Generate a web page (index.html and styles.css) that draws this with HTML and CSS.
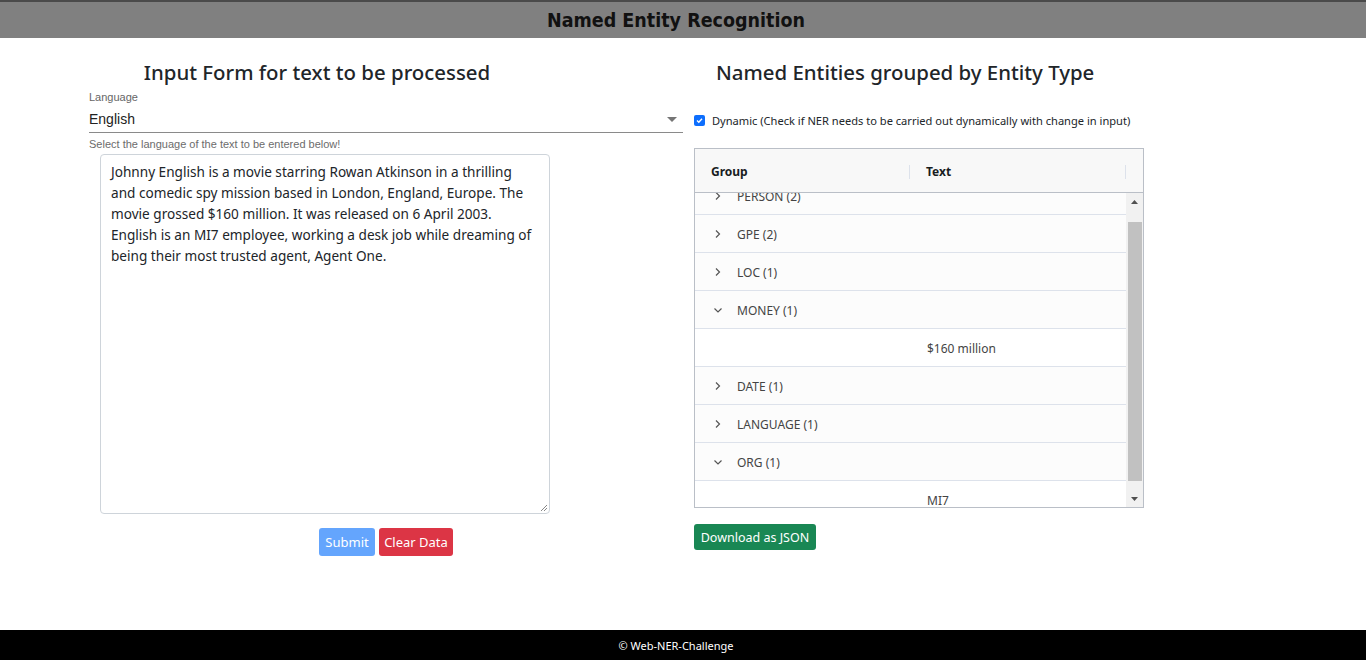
FILE: index.html
```html
<!DOCTYPE html>
<html lang="en">
<head>
<meta charset="utf-8">
<title>Named Entity Recognition</title>
<link rel="stylesheet" href="styles.css">
</head>
<body>
<header class="topbar"><h1 class="app-title">Named Entity Recognition</h1></header>
<main class="content">
  <section class="form-col">
    <h2 class="col-title left-title">Input Form for text to be processed</h2>
    <div class="select-field">
      <label class="select-label">Language</label>
      <div class="select-input"><span>English</span><span class="select-arrow"></span></div>
      <div class="select-helper">Select the language of the text to be entered below!</div>
    </div>
    <div class="textarea-wrap">
      <div class="textarea">Johnny English is a movie starring Rowan Atkinson in a thrilling and comedic spy mission based in London, England, Europe. The movie grossed $160 million. It was released on 6 April 2003. English is an MI7 employee, working a desk job while dreaming of being their most trusted agent, Agent One.<svg class="resize" width="8" height="8" viewBox="0 0 8 8"><path d="M7 1L1 7M7 4L4 7" stroke="#888" stroke-width="1"/></svg></div>
    </div>
    <div class="btn-row">
      <button class="btn btn-submit">Submit</button>
      <button class="btn btn-clear">Clear Data</button>
    </div>
  </section>
  <section class="result-col">
    <h2 class="col-title right-title">Named Entities grouped by Entity Type</h2>
    <label class="check-row"><span class="checkbox"><svg width="9" height="9" viewBox="0 0 9 9"><path d="M2 4.6L3.8 6.3L7 2.8" fill="none" stroke="#fff" stroke-width="1.4"/></svg></span>Dynamic (Check if NER needs to be carried out dynamically with change in input)</label>
    <div class="grid">
      <div class="grid-head">
        <div class="hcell hcell-group">Group</div>
        <div class="hcell hcell-text">Text</div>
      </div>
      <div class="grid-body">
        <div class="viewport">
          <div class="rows">
            <div class="row group"><svg class="chev" width="10" height="10" viewBox="0 0 10 10"><path d="M3 1.5L6.5 5L3 8.5" fill="none" stroke="#555" stroke-width="1.2"/></svg>PERSON (2)</div>
            <div class="row group"><svg class="chev" width="10" height="10" viewBox="0 0 10 10"><path d="M3 1.5L6.5 5L3 8.5" fill="none" stroke="#555" stroke-width="1.2"/></svg>GPE (2)</div>
            <div class="row group"><svg class="chev" width="10" height="10" viewBox="0 0 10 10"><path d="M3 1.5L6.5 5L3 8.5" fill="none" stroke="#555" stroke-width="1.2"/></svg>LOC (1)</div>
            <div class="row group"><svg class="chev" width="10" height="10" viewBox="0 0 10 10"><path d="M1.5 3.5L5 7L8.5 3.5" fill="none" stroke="#555" stroke-width="1.2"/></svg>MONEY (1)</div>
            <div class="row leaf"><span class="leaf-text">$160 million</span></div>
            <div class="row group"><svg class="chev" width="10" height="10" viewBox="0 0 10 10"><path d="M3 1.5L6.5 5L3 8.5" fill="none" stroke="#555" stroke-width="1.2"/></svg>DATE (1)</div>
            <div class="row group"><svg class="chev" width="10" height="10" viewBox="0 0 10 10"><path d="M3 1.5L6.5 5L3 8.5" fill="none" stroke="#555" stroke-width="1.2"/></svg>LANGUAGE (1)</div>
            <div class="row group"><svg class="chev" width="10" height="10" viewBox="0 0 10 10"><path d="M1.5 3.5L5 7L8.5 3.5" fill="none" stroke="#555" stroke-width="1.2"/></svg>ORG (1)</div>
            <div class="row leaf"><span class="leaf-text">MI7</span></div>
          </div>
        </div>
        <div class="scrollbar">
          <div class="sb-btn"><svg width="7" height="4" viewBox="0 0 7 4"><path d="M0 4L3.5 0L7 4Z" fill="#505050"/></svg></div>
          <div class="sb-track"><div class="sb-thumb"></div></div>
          <div class="sb-btn"><svg width="7" height="4" viewBox="0 0 7 4"><path d="M0 0L3.5 4L7 0Z" fill="#505050"/></svg></div>
        </div>
      </div>
    </div>
    <button class="btn btn-download">Download as JSON</button>
  </section>
</main>
<footer class="footer">© Web-NER-Challenge</footer>
</body>
</html>
```
FILE: styles.css
```css
* { box-sizing: border-box; }
html, body { margin: 0; padding: 0; }
body {
  width: 1366px;
  height: 660px;
  overflow: hidden;
  font-family: "Noto Sans", "Open Sans", sans-serif;
  color: #212529;
  background: #fff;
  display: flex;
  flex-direction: column;
}
.topbar {
  height: 38px;
  background: #808080;
  border-top: 2px solid #4a4a4a;
  display: flex;
  align-items: center;
  justify-content: center;
  padding-right: 14px;
}
.app-title {
  margin: 0;
  font-family: "DejaVu Sans Condensed", "DejaVu Sans", sans-serif;
  font-weight: bold;
  font-size: 19.5px;
  color: #111;
}
.content {
  flex: 1;
  display: flex;
  padding-left: 89px;
  gap: 11px;
}
.form-col { width: 594px; display: flex; flex-direction: column; }
.result-col { width: 460px; display: flex; flex-direction: column; }
.col-title {
  margin: 0;
  font-weight: 500;
  font-size: 20.4px;
  line-height: 28px;
  color: #212529;
  padding-top: 20px;
}
.left-title { width: 456px; text-align: center; }
.right-title { padding-left: 22px; }
.select-field { margin-top: 5px; font-family: "Liberation Sans", Arial, sans-serif; }
.select-label { display: block; font-size: 11px; color: #666; line-height: 13px; }
.select-input {
  height: 29px;
  display: flex;
  align-items: center;
  justify-content: space-between;
  border-bottom: 1px solid #8a8a8a;
  font-size: 14px;
  color: #222;
  padding-top: 2px;
}
.select-arrow {
  width: 0; height: 0;
  border-left: 5px solid transparent;
  border-right: 5px solid transparent;
  border-top: 5px solid #757575;
  margin-right: 6px;
}
.select-helper { font-size: 11px; color: #6c6c6c; line-height: 13px; margin-top: 5px; }
.textarea-wrap { padding-left: 11px; margin-top: 3px; }
.textarea {
  position: relative;
  width: 450px;
  height: 360px;
  border: 1px solid #ced4da;
  border-radius: 4px;
  padding: 6px 10px;
  font-size: 13.6px;
  line-height: 21px;
  color: #212529;
}
.resize { position: absolute; right: 1px; bottom: 1px; }
.btn-row { display: flex; gap: 4px; padding-left: 230px; margin-top: 14px; }
.btn {
  border: none;
  border-radius: 3px;
  color: #fff;
  font-family: "Noto Sans", sans-serif;
  font-size: 13px;
  height: 28px;
  padding: 0;
  white-space: nowrap;
  cursor: pointer;
}
.btn-submit { background: #64a5fd; width: 56px; }
.btn-clear { background: #dc3545; width: 74px; }
.check-row {
  display: flex;
  align-items: center;
  gap: 7px;
  font-size: 11.1px;
  color: #212529;
  margin-top: 27px;
  height: 14px;
  white-space: nowrap;
}
.checkbox {
  width: 11px; height: 11px;
  background: #0d6efd;
  border-radius: 2px;
  display: flex; align-items: center; justify-content: center;
}
.grid {
  margin-top: 21px;
  width: 450px;
  border: 1px solid #babfc7;
  font-size: 12px;
}
.grid-head {
  height: 44px;
  background: #f8f8f8;
  border-bottom: 1px solid #babfc7;
  display: flex;
  align-items: center;
  padding-top: 2px;
}
.hcell {
  font-weight: bold;
  color: #181d1f;
  padding-left: 16px;
  height: 14px;
  line-height: 14px;
  border-right: 1px solid #dde2eb;
}
.hcell-group { width: 215px; }
.hcell-text { width: 216px; }
.grid-body { display: flex; height: 314px; }
.viewport { flex: 1; overflow: hidden; }
.rows { margin-top: -16px; }
.row {
  height: 38px;
  border-bottom: 1px solid #dde2eb;
  display: flex;
  align-items: center;
  color: #444;
  padding-left: 18px;
  padding-top: 2px;
}
.row.group { background: #fcfcfc; }
.row.leaf { background: #fff; padding-left: 232px; }
.chev { margin-right: 14px; flex: none; margin-top: -2px; }
.scrollbar {
  width: 17px;
  background: #f1f1f1;
  display: flex;
  flex-direction: column;
}
.sb-btn { height: 17px; display: flex; align-items: center; justify-content: center; }
.sb-track { flex: 1; padding: 12px 1px 9px 2px; display: flex; }
.sb-thumb { flex: 1; background: #c1c1c1; }
.btn-download {
  margin-top: 16px;
  width: 122px;
  height: 26px;
  background: #198754;
  font-size: 12.5px;
}
.footer {
  height: 30px;
  background: #000;
  color: #fff;
  font-size: 11px;
  display: flex;
  align-items: center;
  justify-content: center;
  padding-right: 14px;
  font-family: "Noto Sans", sans-serif;
}
```
